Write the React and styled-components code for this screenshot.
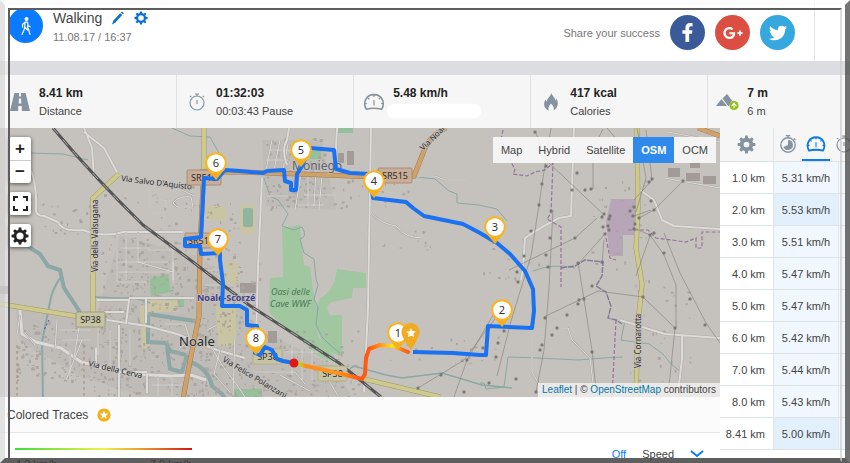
import React, { useState } from "react";
import styled, { createGlobalStyle, css } from "styled-components";
import { FaFacebookF, FaGooglePlusG, FaTwitter } from "react-icons/fa";

const BLUE = "#0a7aff";
const GREY = "#8593a0";

const GlobalStyle = createGlobalStyle`
  * {
    box-sizing: border-box;
  }

  body {
    margin: 0;
    overflow: hidden;
    background: #fff;
    color: #444;
    font-family: "Liberation Sans", Arial, sans-serif;
    font-size: 11px;
  }

  button {
    padding: 0;
    border: 0;
    background: none;
    color: inherit;
    font: inherit;
    cursor: pointer;
  }
`;

const splits = [
  ["1.0 km", "5.31 km/h"],
  ["2.0 km", "5.53 km/h", true],
  ["3.0 km", "5.51 km/h"],
  ["4.0 km", "5.47 km/h"],
  ["5.0 km", "5.47 km/h"],
  ["6.0 km", "5.42 km/h"],
  ["7.0 km", "5.44 km/h"],
  ["8.0 km", "5.43 km/h"],
  ["8.41 km", "5.00 km/h", true],
];

const layers = ["Map", "Hybrid", "Satellite", "OSM", "OCM"];

// Icons
const Gear = ({ size = 14, hole = 4, title }) => (
  <svg width={size} height={size} viewBox="0 0 20 20" role={title ? "img" : undefined} aria-label={title}>
    {[0, 45, 90, 135, 180, 225, 270, 315].map((a) => (
      <path key={a} d="M8 4.5 8.6 .6h2.8L12 4.5z" fill="currentColor" transform={`rotate(${a} 10 10)`} />
    ))}
    <circle cx="10" cy="10" r={(hole + 7) / 2} fill="none" stroke="currentColor" strokeWidth={7 - hole} />
  </svg>
);

const Gauge = ({ size = 22, weight = 1.6 }) => (
  <svg width={size} height={size} viewBox="0 0 22 22" fill="none" stroke="currentColor" strokeWidth={weight}>
    <path d="M3.2 18.2C-.6 11 3.6 3.6 11 3.6S22.6 11 18.8 18.2Q11 16.4 3.2 18.2z" strokeLinejoin="round" />
    <path d="M11 9v5.5M11 4v2M4.9 7l1.3 1.2M17.1 7l-1.3 1.2M2.2 12.5h1.7M19.8 12.5h-1.7" strokeWidth="1.2" />
  </svg>
);

const Stopwatch = ({ size = 18 }) => (
  <svg width={size} height={size} viewBox="0 0 18 18" fill="none" stroke="currentColor" strokeWidth="1.2">
    <circle cx="9" cy="10" r="7" />
    <path d="M9 3V1M7 1h4M3.2 4.2 2 3M14.8 4.2 16 3M9 7v4" />
  </svg>
);

const PieWatch = () => (
  <svg width="18" height="20" viewBox="0 0 18 20" fill="none" stroke="currentColor" strokeWidth="1.4">
    <circle cx="9" cy="11" r="7.2" />
    <path d="M9 4V1.6M6.8 1.6h4.4M15 4.6l1.4 1.4" />
    <path d="M9 11V6a5 5 0 1 1-4.6 7z" fill="currentColor" stroke="none" />
  </svg>
);

const Road = () => (
  <svg width="20" height="18" viewBox="0 0 20 18" fill="currentColor">
    <path d="M4.4 0H9v3.4h2V0h4.6L20 18h-8.2v-5H8.2v5H0zM9 5.6 8.6 10.6h2.8L11 5.6z" fillRule="evenodd" />
  </svg>
);

const Flame = () => (
  <svg width="14" height="18" viewBox="0 0 14 18" fill="currentColor">
    <path d="M7.2 0c1 3 4 4.4 4.2 7.4.8-.4 1-1.4 1-2C14.6 9 14.6 15 9.4 17.6 10.6 14.4 9 12.600 7 10.4 5 12.6 3.8 14.4 4.8 17.6-.6 15.4-.8 10 1.6 6.6c.2 1 .6 1.8 1.4 2C2.8 5 6.6 4 7.2 0z" />
  </svg>
);

const Elevation = () => (
  <svg width="24" height="18" viewBox="0 0 24 18">
    <path d="M0 13 5.5 6 11 13zM6.5 5.5 11 1l5 6.5L13 13h-.8z" fill={GREY} />
    <circle cx="18" cy="12.5" r="4.6" fill="#96bf22" />
    <path d="M15.6 13 18 10.4 20.4 13M18 11v4" fill="none" stroke="#fff" strokeWidth="1.1" />
  </svg>
);

const Walker = () => (
  <svg width="14" height="20" viewBox="0 0 14 20" fill="none" stroke="#fff" strokeWidth="1.2" strokeLinejoin="round" strokeLinecap="round">
    <circle cx="7.5" cy="3" r="1.4" fill="#fff" />
    <path d="M6 6.200h2.600l.5 3.200 2 1.400M6 6.200 3.600 8.200v3M6 6.200l-.2 5-1 3.400L3 18.400M8.800 9l-.2 2.600 1.400 3 .9 3.800M5.800 11l2.600 3" />
  </svg>
);

const Pencil = () => (
  <svg width="12" height="14" viewBox="0 0 12 14" fill="currentColor">
    <path d="M0 13.5 1.2 9.8 8.2 2.2 10.2 4 3.2 11.8zM8.900 1.400 10 .4 12 2.200 11 3.300z" />
  </svg>
);

const STAR = "M0-5 1.5-1.8 5-1.5 2.300.8 3.100 4.300 0 2.400-3.100 4.300-2.300.8-5-1.500-1.500-1.800z";

const StarBadge = () => (
  <svg width="14" height="14" viewBox="-7 -7 14 14">
    <circle r="6.6" fill="#f0b21a" />
    <path d={STAR} fill="#fff" transform="scale(.85)" />
  </svg>
);

// Map drawing
// tiny building outlines scattered inside the given box
const scatter = (x, y, w, h, n, seed) => {
  let s = seed;
  const next = () => {
    s = (s * 16807) % 2147483647;
    return s / 2147483647;
  };
  next();
  let d = "";
  for (let i = 0; i < n; i++) {
    const a = 1 + Math.round(next() * 2);
    const b = 1 + Math.round(next() * 2);
    d += `M${(x + next() * w).toFixed(1)} ${(y + next() * h).toFixed(1)}h${a}v${b}h-${a}z`;
  }
  return d;
};

const buildings = [
  [16, 322, 75, 58, 110, 11],
  [88, 305, 60, 90, 140, 23],
  [100, 236, 90, 60, 90, 37],
  [118, 262, 80, 50, 90, 43],
  [148, 318, 60, 78, 100, 59],
  [200, 262, 60, 134, 200, 61],
  [260, 330, 100, 66, 100, 71],
  [265, 138, 60, 70, 120, 83],
  [205, 200, 35, 60, 30, 97],
  [50, 205, 30, 30, 14, 101],
  [150, 180, 50, 30, 18, 113],
  [330, 170, 80, 40, 28, 127],
  [380, 220, 50, 30, 12, 131],
  [480, 230, 60, 50, 16, 137],
  [590, 180, 60, 90, 30, 149],
  [630, 280, 60, 110, 36, 151],
  [390, 335, 120, 30, 20, 163],
  [12, 190, 200, 50, 20, 167],
].map((b) => scatter(...b)).join("");

const waters = [
  ["M10 228q15 18 30 26l8 12 12 4 4 18 12 18 5 8", 4],
  ["M60 278q-8 12-10 24l-8 40 1 60", 2],
  ["M28 153l35 1 25 6", 1],
  ["M172 128l18 8 20 1 9 16-4 8", 1],
  ["M95 297l20 1h20l15 5", 1.5],
  ["M264 178l6 18 8 4 10 14-6 12 12 4 8-3q6 10-2 12l4 14 10 6 2 20 2 6-4 14 4 8-2 18 6 12 8 8 10 8", 1],
  ["M346 371l8-5 14 4 18 5 16 3 40-5 40 12 30 3", 1.5],
  ["M410 176l25 3 14 12 8 3v9l22 2 18 4 10 12", 1],
  ["M480 383h4l2 6 18-2 4-30 30 1 40 2 25-2 20-1", 1],
  ["M533 271q20-8 42-3", 1],
  ["M625 320l-4 20 28 4 14 10 8 10 10 8", 1],
  ["M148 314l47 7M148 314v28l18 1M166 343l4 8 16 4M167 347l3 22 12 3 5-17", 4],
  ["M190 362q18 6 22 24l10 8 4 6", 4],
];

const roads = [
  ["M84 128l8 20 2 30M84 132l20 16 14 26M31 170q6 16 5 40 0 6 8 6l14 6q4 10 25 8 20 8 40 2h60", 2],
  ["M107 320l40 6 30 8 40 16 28 8", 2],
  ["M20 310l2 24 14 8 25 6 20 14 50 12 40 2 20-1 15 5", 3],
  ["M17 335l3-20M35 345l-10-12M70 350v35M82 340l-16 40M57 320l-2 30M80 322l-6 36M60 330h30M62 340h28", 1],
  ["M97 300h32l-3 24M104 312h20M129 298h65M146 298v25M96 348v20h20M119 325v72M119 372h28M147 375v18", 2],
  ["M117 232v50h30M126 232v48M138 232v30l35 10M148 250h25v30M173 262v22M118 262h50M120 248h30M118 272h52", 1],
  ["M149 180v30M152 200h14v8M162 190h20l12 6M150 213h14M173 203q6-8 18-6l2 10h-16z", 1],
  ["M207 330l10-5M205 300h35l18 2M205 285h20M210 345l12 20 15 20 8 12M220 350l-6 24 16 18M235 335l-2 60M205 270h30", 1],
  ["M165 324h20l5 16-10 8M110 330v40M98 325v30M130 330v36M158 376v20M172 378v18M152 385h30", 1],
  ["M262 178l-4 90-2 70", 2],
  ["M272 140l-6 30M280 140l-6 30M288 144l-5 26M266 160h22M270 150h22M266 196h22", 1],
  ["M305 150l-10 60M308 170v35M316 170l-2 36M322 175l-3 35M304 195h32M298 205h26", 1],
  ["M371 128l-1 60-2 120-4 84M337 128l-2 40M289 128l-2 12q-6 10 0 25", 2],
  ["M372 214q10 10 24 12 8 12 28 12M413 176h22l10 4h22", 1],
  ["M292 345v30M302 340v40M312 350v30M284 352h38M290 365l60 3M280 375l30 16M255 372h40l10 12M324 372l14 24", 1],
  ["M574 128l-3 88-12 2q-20 10-34 20l-2 30-2 12", 2],
  ["M532 328v44l8 14M534 328h34l4 12 18 18 4 34", 1],
  ["M620 320l45 14 55 4M682 335v24l-4 34M640 190l14 10 8 20 12 6 46 3", 2],
  ["M664 178l56 10M668 132l52 10", 1],
];

const grid = [
  "M602 213L548 162L535 131M551 128l-9 56-3 21-8 51-20 65-14 55M597 218l-22 20-66 32M605 234l-27 30M553 210l-4 78-5 62-8 42M578 262l14 88 4 40",
  "M604 240l-2 24M636 212l10-34-9-50M634 200l18-20-6-50M634 216l17-6M639 218l15-8 29-29M544 317l54-26 45 6 32 31-6 58",
  "M634 228l16 7 14 20 12 30v43M650 236l-14 40M664 233l16 40 26 50 14 20M593 189v-40l10-20M607 128l24 28M454 397l13-37 29-50M418 388l46-28 33-44",
];

const nodes = [
  [546, 166], [542, 184], [539, 205], [551, 211], [572, 190], [585, 190], [591, 189], [577, 173], [531, 231],
  [524, 256], [546, 255], [575, 238], [550, 238], [604, 214], [602, 217], [603, 227], [609, 219], [608, 226], [605, 234],
  [610, 216], [609, 230], [634, 207], [630, 211], [633, 216], [639, 218], [635, 224], [634, 229], [651, 201], [654, 210],
  [649, 182], [652, 179], [683, 181], [650, 235], [654, 233], [664, 253], [535, 132], [578, 263], [602, 262],
  [517, 272], [518, 282], [548, 267], [592, 286], [579, 300], [584, 299], [578, 304], [567, 315], [545, 318], [557, 328],
  [552, 335], [542, 345], [540, 350], [643, 297], [675, 328], [690, 299], [705, 325], [592, 352], [536, 392], [516, 379],
  [504, 331], [498, 343], [483, 348], [496, 357], [489, 383], [467, 360], [441, 375], [418, 388], [464, 392],
];

const blueTrack =
  "M294 363l-11-2-6-2-5-9-7-3-5 8-5-2 5-8 -3-19-10-1v-15l-7-4h-18l1-23-3-23v-7l-19 1-1-8h-15v-7l16-2 3-59 13 1 8-9 15 1 23 2 4-2 17-1 1 11 6 2v7h5l1-16 4-6 9-20 24 2 2 19 14 4 20 1 3 24 33 4 7 6 11 8 39 8 17 9 17 10 13 11 15 17 8 18 1 22-2 17-44-2-2 29h-6l-27-2-40-1";

const markers = [
  ["6", 216, 163],
  ["5", 301, 150],
  ["4", 374, 181],
  ["3", 495, 227],
  ["2", 502, 310],
  ["7", 218, 239],
  ["8", 256, 338],
  ["1", 398, 333],
];

const streets = [
  ["Via Salvo D'Aquisto", 121, 181, 7],
  ["Via della Valsugana", 98, 272, -90],
  ["Via della Cerva", 88, 366, 13],
  ["Via Felice Polanzani", 222, 361, 31],
  ["Via Noal", 423, 151, -44],
  ["Via Cornarotta", 641, 368, -90],
];

const Pin = ({ x, y, label }) => (
  <g transform={`translate(${x} ${y})`}>
    <path d="M-9 6 0 17 9 6z" fill="#f4b01e" />
    <circle r="9.8" fill="#fff" stroke="#f8b422" strokeWidth="2" />
    <text y="4" textAnchor="middle" fontSize="11" fill="#333">{label}</text>
  </g>
);

const Shield = ({ x, y, w, fill, stroke, children }) => (
  <g>
    <rect x={x} y={y} width={w} height="15" rx="1" fill={fill} stroke={stroke} strokeWidth=".8" />
    <text x={x + w / 2} y={y + 11} textAnchor="middle" fontSize="9">{children}</text>
  </g>
);

const RouteMap = () => (
  <MapCanvas viewBox="0 128 720 269" preserveAspectRatio="xMidYMid slice" role="img" aria-label="Route map">
    <defs>
      <linearGradient id="heat" gradientUnits="userSpaceOnUse" x1="294" x2="411" y1="0" y2="0">
        <stop offset="0" stopColor="#8edb2a" />
        <stop offset=".05" stopColor="#b8d62a" />
        <stop offset=".1" stopColor="#ff8a1e" />
        <stop offset=".36" stopColor="#ff981c" />
        <stop offset=".55" stopColor="#ff5a12" />
        <stop offset=".65" stopColor="#ff5a12" />
        <stop offset=".76" stopColor="#ffa51c" />
        <stop offset=".84" stopColor="#ffe51c" />
        <stop offset=".93" stopColor="#ff6a1c" />
        <stop offset="1" stopColor="#ff5212" />
      </linearGradient>
    </defs>
    <rect y="128" width="720" height="269" fill="#c5c2be" />
    <path d="M16 310l80 8 4-16 20-66 76 20 8 60-4 80h-60l-60-20-60-34zM205 260l55 70 70 34 22 32H190zM262 140h60l14 70-70-4z" fill="#bfbbb6" />

    {/* land use */}
    <path d="M282 228l18-3 1 14 3 26 6 2 2 16 4 24 2 30 17 20-2 4-12-3-51-44-1-8 1-28 13-1v-16z" fill="#a0c7a0" />
    <path d="M337 269l29 4v15h-13l-1 10-20 4q-8 4-2 13h12v42l-15-7q-12-18-12-40l5-12q14-6 17-29z" fill="#a0c7a0" />
    <path d="M150 278l18-4 3 18-20 4zM166 299h18v8h-14zM232 389h30v8h-30zM339 128h14v5h-16zM310 151h11v8h-11z" fill="#95c09a" />
    <path d="M240 205h15v29h-15zM206 206h20v14h-20zM216 306h20v40h-18zM148 300h30v12h-30zM224 262h14v22h-14zM140 306h10v42h-8z" fill="#c9c5a3" />
    <rect x="243" y="208" width="10" height="19" rx="2" fill="#8fb5a0" />
    <path d="M611 199h24v36h-12v21h-13l-4-34z" fill="#b8a5b8" />
    <path d="M338 153h6v10h-6zM347 151h7v14h-7zM268 331h9v12h-9zM0 286h10v8H0zM240 283h16v10h-16zM668 168h12v9h-12zM686 173h14v8h-14zM703 176h13v8h-13zM690 160h10v8h-10z" fill="#a39b96" />

    {waters.map(([d, w]) => (
      <path key={d} d={d} fill="none" stroke="#8ba7a6" strokeWidth={w} />
    ))}
    <path d={buildings} fill="#aca59f" />
    {roads.map(([d, w]) => (
      <g key={d} fill="none" strokeLinejoin="round">
        <path d={d} stroke="#aeabA8" strokeWidth={w + 1} />
        <path d={d} stroke="#dddbd8" strokeWidth={w} />
      </g>
    ))}

    {/* main roads */}
    <g fill="none">
      <path d="M0 304l88 14M93 318V198l26-24M204 128v58M637 128l1 80-2 40 6 36-4 40-2 74M364 379l76 18" stroke="#9b9866" strokeWidth="5" />
      <path d="M0 304l88 14M93 318V198l26-24M204 128v58M637 128l1 80-2 40 6 36-4 40-2 74M364 379l76 18" stroke="#cdca8c" strokeWidth="4" />
      <path d="M203 186l-3 60-1 70-9 45-7 38M200 172h40l60 2 76 3 38-1 8-20q6-20 24-28M698 128l22 8" stroke="#a37a4c" strokeWidth="5" />
      <path d="M203 186l-3 60-1 70-9 45-7 38M200 172h40l60 2 76 3 38-1 8-20q6-20 24-28M698 128l22 8" stroke="#cfa26c" strokeWidth="4" />
    </g>

    {/* railway */}
    <path d="M53 128q40 48 90 97l46 34 60 46 90 58 42 34" fill="none" stroke="#555" strokeWidth="3" />
    <path d="M53 128q40 48 90 97l46 34 60 46 90 58 42 34" fill="none" stroke="#aaa" strokeWidth="1" strokeDasharray="8 7" />

    {/* borders and power lines */}
    <path d="M503 130l-2 10 14 30-2 4 14 2 8-4 10-2 8-7-2 50-4 6 14 8v60M606 238l4 20 6 2M628 230h20l8 8 30 4 10-4v10h6v-16h18M616 320l-4 76" fill="none" stroke="#967398" strokeWidth="1.2" strokeDasharray="4 2" />
    <path d="M561 268l14-2 10-6 18 2-1 14-6 10 10 6 5 14-3 12 8 2 6 4" fill="none" stroke="#82799a" strokeWidth="1.4" strokeDasharray="6 1" />
    <path d="M17 345v52M84 345v52" stroke="#a08c7a" strokeDasharray="3 3" />
    <path d="M49 320l-5 10" stroke="#4650a0" strokeDasharray="2 2" />
    {grid.map((d) => (
      <path key={d} d={d} fill="none" stroke="#827e7a" strokeWidth=".6" />
    ))}
    {nodes.map(([x, y]) => (
      <rect key={`${x}-${y}`} x={x - 1} y={y - 1} width="2" height="2" fill="#999" stroke="#5c5956" strokeWidth=".6" />
    ))}

    {/* labels */}
    <g fontSize="9" fill="#2b2b2b">
      <g stroke="#c5c2be" strokeWidth="1.5" paintOrder="stroke">
        {streets.map(([name, x, y, angle]) => (
          <text key={name} fontSize="8" transform={`translate(${x} ${y}) rotate(${angle})`}>{name}</text>
        ))}
        <text x="179" y="346" fontSize="13">Noale</text>
        <text x="292" y="170" fontSize="12" fill="#5c6470">Moniego</text>
        <text x="197" y="301" fontWeight="bold" fill="#40408a">Noale-Scorzé</text>
      </g>
      <g fontStyle="italic" fill="#4b7a55">
        <text x="271" y="295">Oasi delle</text>
        <text x="270" y="307">Cave WWF</text>
      </g>
      <Shield x={187} y={170} w={34} fill="#c9ae97" stroke="#a48468">SR515</Shield>
      <Shield x={378} y={168} w={34} fill="#c9ae97" stroke="#a48468">SR515</Shield>
      <Shield x={185} y={233} w={32} fill="#c9ae97" stroke="#a48468">SR515</Shield>
      <Shield x={76} y={312} w={29} fill="#c6c4a4" stroke="#96966c">SP38</Shield>
      <Shield x={253} y={349} w={29} fill="#c6c4a4" stroke="#b0ad78">SP38</Shield>
      <Shield x={318} y={366} w={29} fill="#c6c4a4" stroke="#b0ad78">SP38</Shield>
    </g>

    {/* track */}
    <g fill="none" strokeWidth="4" strokeLinejoin="round">
      <path d={blueTrack} stroke="#1a72f0" />
      <path d="M296 363l10 3 14 3 22 5 20 5 3-5 1-16 3-9 11-4 13 1 15 6" stroke="url(#heat)" strokeLinecap="round" />
    </g>
    <circle cx="294" cy="363" r="4.5" fill="#e01818" />
    {markers.map(([label, x, y]) => (
      <Pin key={label} label={label} x={x} y={y} />
    ))}
    <path d="M402 335a9 9 0 1 1 17 0q-2 6-8 15-7-9-9-15z" fill="#f0ab22" />
    <path d={STAR} fill="#fff" transform="translate(411 333)" />
  </MapCanvas>
);

const App = () => {
  const [layer, setLayer] = useState("OSM");

  return (
    <>
      <GlobalStyle />
      <Header>
        <Avatar><Walker /></Avatar>
        <Title>
          <TitleRow>
            <h1>Walking</h1>
            <IconButton aria-label="Edit"><Pencil /></IconButton>
            <IconButton aria-label="Settings"><Gear size={14} /></IconButton>
          </TitleRow>
          <p>11.08.17 / 16:37</p>
        </Title>
        <Share>
          <span>Share your success</span>
          <Social href="#facebook" $color="#3b5a9a" aria-label="Facebook"><FaFacebookF size={19} /></Social>
          <Social href="#google" $color="#dc4e41" aria-label="Google+"><FaGooglePlusG size={20} /></Social>
          <Social href="#twitter" $color="#35a8e0" aria-label="Twitter"><FaTwitter size={18} /></Social>
        </Share>
      </Header>

      <Stats>
        <Stat><i><Road /></i><div><b>8.41 km</b><span>Distance</span></div></Stat>
        <Stat><i><Stopwatch /></i><div><b>01:32:03</b><span>00:03:43 Pause</span></div></Stat>
        <Stat><i><Gauge /></i><div><b>5.48 km/h</b><Blank /></div></Stat>
        <Stat><i><Flame /></i><div><b>417 kcal</b><span>Calories</span></div></Stat>
        <Stat><i><Elevation /></i><div><b>7 m</b><span>6 m</span></div></Stat>
      </Stats>

      <Body>
        <Main>
          <MapBox>
            <RouteMap />
            <Controls>
              <ControlGroup>
                <button aria-label="Zoom in">+</button>
                <button aria-label="Zoom out">−</button>
              </ControlGroup>
              <ControlGroup>
                <button aria-label="Fullscreen">
                  <svg width="15" height="15" viewBox="0 0 15 15" fill="none" stroke="#222" strokeWidth="2">
                    <path d="M1 5V1h4M10 1h4v4M14 10v4h-4M5 14H1v-4" />
                  </svg>
                </button>
              </ControlGroup>
              <ControlGroup>
                <button aria-label="Map settings"><Gear size={18} hole={4} /></button>
              </ControlGroup>
            </Controls>
            <Layers>
              {layers.map((name) => (
                <LayerButton key={name} $active={name === layer} onClick={() => setLayer(name)}>
                  {name}
                </LayerButton>
              ))}
            </Layers>
            <Attribution>
              <a href="#leaflet">Leaflet</a> | © <a href="#osm">OpenStreetMap</a> contributors
            </Attribution>
          </MapBox>

          <Traces>
            <h2>Colored Traces</h2>
            <StarBadge />
          </Traces>
          <Legend>
            <Scale>
              <span>4.2 km/h</span>
              <span>7.0 km/h</span>
            </Scale>
            <TraceMode>
              <ModeButton $active>Off</ModeButton>
              <ModeButton>Speed</ModeButton>
              <ModeButton $active aria-label="More">
                <svg width="14" height="8" viewBox="0 0 14 8" fill="none" stroke="currentColor" strokeWidth="2">
                  <path d="M1 1l6 5 6-5" />
                </svg>
              </ModeButton>
            </TraceMode>
          </Legend>
        </Main>

        <Side>
          <Splits>
            <colgroup>
              <col width="54" />
              <col width="65" />
              <col />
            </colgroup>
            <thead>
              <tr>
                <th><Gear size={19} hole={3} title="Distance" /></th>
                <th colSpan="2">
                  <Tabs>
                    <Tab aria-label="Pace"><PieWatch /></Tab>
                    <Tab $active aria-label="Speed"><Gauge size={20} weight={2} /></Tab>
                    <Tab aria-label="Duration"><Stopwatch /></Tab>
                  </Tabs>
                </th>
              </tr>
            </thead>
            <tbody>
              {splits.map(([km, speed, strong]) => (
                <tr key={km}>
                  <td>{km}</td>
                  <SpeedCell $strong={strong}>{speed}</SpeedCell>
                  <SpeedCell />
                </tr>
              ))}
            </tbody>
          </Splits>
        </Side>
      </Body>
      <Frame><div /></Frame>
    </>
  );
};

const Header = styled.header`
  display: flex;
  height: 61px;
  padding: 8px 0 0 8px;
`;

const Avatar = styled.div`
  display: flex;
  align-items: center;
  justify-content: center;
  width: 35px;
  height: 35px;
  border-radius: 50%;
  background: ${BLUE};
`;

const Title = styled.div`
  flex: 1;
  padding-left: 10px;

  h1 {
    margin: 0;
    font-size: 14px;
    font-weight: normal;
    line-height: 20px;
  }

  p {
    margin: 0;
    color: #777;
    line-height: 18px;
  }
`;

const TitleRow = styled.div`
  display: flex;
  align-items: center;
  gap: 10px;
`;

const IconButton = styled.button`
  display: flex;
  color: #0a6fd8;
`;

const Share = styled.div`
  display: flex;
  align-items: center;
  gap: 10px;
  margin: -8px 35px 0 0;
  padding: 4px 19px 0 0;
  border-right: 1px solid #e6e6e6;
  color: #777;
`;

const Social = styled.a`
  display: flex;
  align-items: center;
  justify-content: center;
  width: 35px;
  height: 35px;
  border-radius: 50%;
  background: ${({ $color }) => $color};
  color: #fff;
`;

const Stats = styled.section`
  display: flex;
  overflow: hidden;
  border-top: 14px solid #dcdde0;
  background: #f6f6f6;
`;

const Stat = styled.div`
  display: flex;
  /* a little wider than a fifth, the last one runs under the edge */
  flex: 0 0 calc(100% / 4.8);
  align-items: center;
  height: 53px;
  border-right: 1px solid #e0e1e3;
  line-height: 18px;

  i {
    display: flex;
    justify-content: center;
    width: 39px;
    color: ${GREY};
  }

  b,
  span {
    display: block;
  }

  b {
    color: #222;
    font-size: 12px;
  }
`;

const Blank = styled.span`
  width: 94px;
  height: 14px;
  margin: 2px 0 2px -6px;
  border-radius: 7px;
  background: #fff;
  box-shadow: 0 0 2px #fff;
`;

const Body = styled.div`
  display: flex;
  align-items: flex-start;
`;

const Main = styled.main`
  flex: 1;
  min-width: 0;
`;

const MapBox = styled.div`
  position: relative;
`;

const MapCanvas = styled.svg`
  display: block;
  width: 100%;
  aspect-ratio: 720 / 269;
  font-family: "Noto Sans", sans-serif;
`;

const Controls = styled.div`
  position: absolute;
  top: 9px;
  left: 9px;
  display: flex;
  flex-direction: column;
  gap: 9px;
`;

const ControlGroup = styled.div`
  border-radius: 3px;
  background: #fff;
  box-shadow: 0 1px 4px rgba(0, 0, 0, 0.6);

  button {
    display: flex;
    align-items: center;
    justify-content: center;
    width: 22px;
    height: 23px;
    color: #222;
    font-size: 17px;
    font-weight: bold;
    line-height: 20px;
  }

  button + button {
    border-top: 1px solid #ccc;
  }
`;

const Layers = styled.div`
  position: absolute;
  top: 9px;
  right: 4px;
  display: flex;
  background: rgba(248, 248, 248, 0.93);
`;

const LayerButton = styled.button`
  height: 26px;
  padding: 0 8px;

  ${({ $active }) =>
    $active &&
    css`
      background: #2f8aeb;
      color: #fff;
      font-weight: bold;
    `}
`;

const Attribution = styled.div`
  position: absolute;
  right: 0;
  bottom: 0;
  padding: 0 4px;
  background: rgba(245, 245, 245, 0.75);
  font-size: 10px;
  line-height: 14px;

  a {
    color: #0078a8;
    text-decoration: none;
  }
`;

const Traces = styled.div`
  display: flex;
  align-items: center;
  gap: 9px;
  height: 36px;
  padding-left: 7px;
  border-bottom: 1px solid #e4e4e4;
  background: #fbfbfb;

  h2 {
    margin: 0;
    font-size: 12px;
    font-weight: normal;
  }
`;

const Legend = styled.div`
  display: flex;
  align-items: flex-start;
  justify-content: space-between;
  padding: 15px 16px 0 15px;
`;

const Scale = styled.div`
  display: flex;
  justify-content: space-between;
  width: 177px;
  padding-top: 8px;
  border-top: 2px solid;
  border-image: linear-gradient(90deg, #3bdc3b, #f2f04a 50%, #ea8a2a 75%, #d01414) 1;
`;

const TraceMode = styled.div`
  display: flex;
  align-items: center;
  gap: 16px;
`;

const ModeButton = styled.button`
  color: ${({ $active }) => ($active ? BLUE : "#444")};
`;

const Side = styled.aside`
  flex: 0 0 130px;
  overflow: hidden;
`;

const Splits = styled.table`
  width: 100%;
  border-spacing: 0;
  table-layout: fixed;

  th,
  td {
    height: 32px;
    padding: 0;
    border-bottom: 1px solid #dfe2e5;
  }

  th {
    height: 34px;
    background: #f6f6f6;
    color: ${GREY};
  }

  th svg {
    display: block;
    margin: auto;
  }

  td:first-child,
  th:first-child {
    border-right: 1px solid #e2e4e6;
  }

  td:first-child {
    padding-right: 8px;
    text-align: right;
    white-space: nowrap;
  }
`;

const SpeedCell = styled.td`
  border-right: 1px solid #e2e8ee;
  background: ${({ $strong }) => ($strong ? "#e2effd" : "#f0f7ff")};
  text-align: center;
  white-space: nowrap;
`;

const Tabs = styled.div`
  display: flex;
`;

const Tab = styled.button`
  flex: 0 0 28px;
  height: 33px;
  border-bottom: 2px solid ${({ $active }) => ($active ? BLUE : "transparent")};
  color: ${({ $active }) => ($active ? "#0a7ae0" : "inherit")};
`;

// beveled window edge lying over the page
const Frame = styled.div`
  position: fixed;
  inset: 0;
  border: 5px solid;
  border-color: rgba(250, 250, 250, 0.8) rgba(70, 70, 70, 0.75) rgba(60, 60, 60, 0.82) rgba(215, 215, 215, 0.7);
  pointer-events: none;

  div {
    height: 100%;
    border: 3px solid;
    border-color: rgba(255, 255, 255, 0.6) transparent transparent rgba(255, 255, 255, 0.45);
    border-bottom-width: 0;
  }

  div::before {
    display: block;
    height: 100%;
    border: 2px solid;
    border-color: #5c5c5e rgba(205, 205, 208, 0.7) transparent #5c5c5e;
    content: "";
  }
`;

export default App;
